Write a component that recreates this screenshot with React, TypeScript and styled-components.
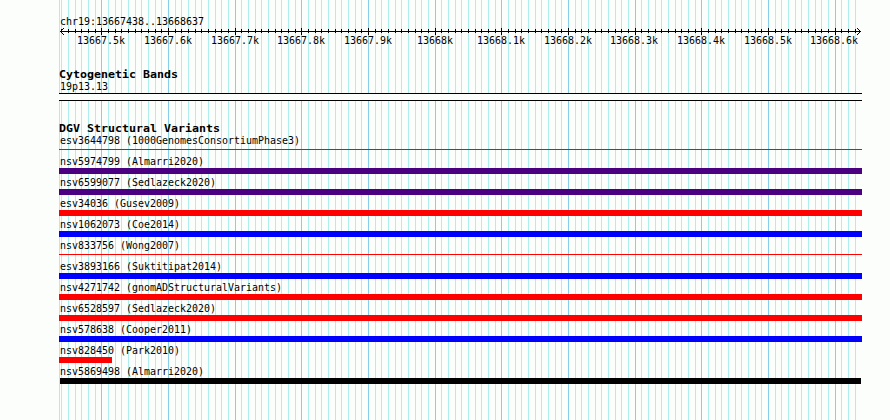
import React from 'react';
import styled, { createGlobalStyle } from 'styled-components';

interface Variant {
  id: string;
  study: string;
  color: string;
  thin?: boolean;
  start?: number;
  width?: number;
}

const variants: Variant[] = [
  { id: 'esv3644798', study: '1000GenomesConsortiumPhase3', color: '#ff0000', thin: true },
  { id: 'nsv5974799', study: 'Almarri2020', color: '#4b0082' },
  { id: 'nsv6599077', study: 'Sedlazeck2020', color: '#4b0082' },
  { id: 'esv34036', study: 'Gusev2009', color: '#ff0000' },
  { id: 'nsv1062073', study: 'Coe2014', color: '#0000ff' },
  { id: 'nsv833756', study: 'Wong2007', color: '#ff0000', thin: true },
  { id: 'esv3893166', study: 'Suktitipat2014', color: '#0000ff' },
  { id: 'nsv4271742', study: 'gnomADStructuralVariants', color: '#ff0000' },
  { id: 'nsv6528597', study: 'Sedlazeck2020', color: '#ff0000' },
  { id: 'nsv578638', study: 'Cooper2011', color: '#0000ff' },
  { id: 'nsv828450', study: 'Park2010', color: '#ff0000', width: 53 },
  { id: 'nsv5869498', study: 'Almarri2020', color: '#000000', start: 1, width: 801 },
];

// one tick every 10 bp, a major one every 100 bp
const ticks = Array.from({ length: 120 }, (_, i) => ({
  x: Math.floor(42.7 + ((i - 6) * 20) / 3),
  major: (i - 6) % 10 === 0,
}));

const majorTicks = ticks.filter(tick => tick.major);

const labelFor = (index: number) => {
  const value = (136675 + index) / 10;
  return `${value}k`;
};

const Gridlines: React.FC = () => (
  <Grid width="803" height="420" shapeRendering="crispEdges">
    <rect x="0" y="0" width="1" height="420" fill="#afeeee" />
    {ticks.map(({ x, major }) => (
      <rect key={x} x={x} y="0" width="1" height="420" fill={major ? '#87ceeb' : '#afeeee'} />
    ))}
  </Grid>
);

const Ruler: React.FC = () => (
  <RulerAxis width="803" height="9" shapeRendering="crispEdges">
    <rect x="1" y="4" width="801" height="1" />
    {ticks.map(({ x, major }) => (
      <rect key={x} x={x} y={major ? 1 : 2} width="1" height={major ? 7 : 4} />
    ))}
    {[1, 2, 3].map(n => (
      <React.Fragment key={n}>
        <rect x={1 + n} y={4 - n} width="1" height="1" />
        <rect x={1 + n} y={4 + n} width="1" height="1" />
        <rect x={801 - n} y={4 - n} width="1" height="1" />
        <rect x={801 - n} y={4 + n} width="1" height="1" />
      </React.Fragment>
    ))}
  </RulerAxis>
);

// SVG text keeps every character on a fixed 6px or 7px advance
const Label: React.FC<{ text: string }> = ({ text }) => (
  <LabelSvg width={text.length * 6} height="13">
    <text x="0" y="10" textLength={text.length * 6} lengthAdjust="spacingAndGlyphs">
      {text}
    </text>
  </LabelSvg>
);

const Title: React.FC<{ text: string }> = ({ text }) => (
  <TitleSvg width={text.length * 7} height="13">
    <text x="0" y="10" textLength={text.length * 7} lengthAdjust="spacingAndGlyphs">
      {text}
    </text>
  </TitleSvg>
);

const App: React.FC = () => (
  <>
    <GlobalStyle />
    <Browser>
      <Gridlines />
      <Tracks>
        <Region>
          <Label text="chr19:13667438..13668637" />
        </Region>
        <Ruler />
        <Scale>
          {majorTicks.map(({ x }, i) => (
            <ScaleCell key={x}>
              <Label text={labelFor(i)} />
            </ScaleCell>
          ))}
        </Scale>

        <CytoTrack>
          <Title text="Cytogenetic Bands" />
          <BandLabel>
            <Label text="19p13.13" />
          </BandLabel>
          <Band />
        </CytoTrack>

        <VariantTrack>
          <Title text="DGV Structural Variants" />
          <VariantList>
            {variants.map(({ id, study, color, thin, start, width }) => (
              <VariantRow key={id}>
                <Label text={`${id} (${study})`} />
                <Bar $color={color} $thin={thin} $start={start} $width={width} />
              </VariantRow>
            ))}
          </VariantList>
        </VariantTrack>
      </Tracks>
    </Browser>
  </>
);

const GlobalStyle = createGlobalStyle`
  body {
    margin: 0;
    background: #fcfefc;
  }
`;

const Browser = styled.main`
  position: relative;
  width: 890px;
  height: 420px;
  overflow: hidden;
  background: #fcfefc;
  color: #000;
`;

const Grid = styled.svg`
  position: absolute;
  top: 0;
  left: 59px;
`;

const Tracks = styled.div`
  position: relative;
  width: 803px;
  margin-left: 59px;
  padding-top: 15px;
`;

const LabelSvg = styled.svg`
  display: block;
  flex-shrink: 0;
  margin-left: 1px;
  overflow: visible;
  font: 11px 'DejaVu Sans Mono', monospace;
`;

const TitleSvg = styled.svg`
  display: block;
  overflow: visible;
  font: bold 11px 'DejaVu Sans Mono', monospace;
`;

const Region = styled.div`
  height: 12px;
`;

const RulerAxis = styled.svg`
  display: block;
`;

const Scale = styled.div`
  display: flex;
  height: 14px;
  margin-left: 8.4px;
  margin-top: -2px;
`;

const ScaleCell = styled.div`
  display: flex;
  justify-content: center;
  flex: 0 0 66.667px;
`;

const CytoTrack = styled.section`
  margin-top: 20px;
`;

const BandLabel = styled.div`
  margin-top: -1px;
  height: 13px;
`;

const Band = styled.div`
  height: 6px;
  border-top: 1px solid #000;
  border-bottom: 1px solid #000;
  background: #fcfefc;
`;

const VariantTrack = styled.section`
  margin-top: 21px;
`;

const VariantList = styled.div`
  margin-top: -1px;
`;

const VariantRow = styled.div`
  height: 21px;
`;

const Bar = styled.div<{ $color: string; $thin?: boolean; $start?: number; $width?: number }>`
  width: ${({ $width }) => $width ?? 803}px;
  height: ${({ $thin }) => ($thin ? 1 : 6)}px;
  margin-top: ${({ $thin }) => ($thin ? 2 : 0)}px;
  margin-left: ${({ $start }) => $start ?? 0}px;
  background: ${({ $color }) => $color};
`;

export default App;
